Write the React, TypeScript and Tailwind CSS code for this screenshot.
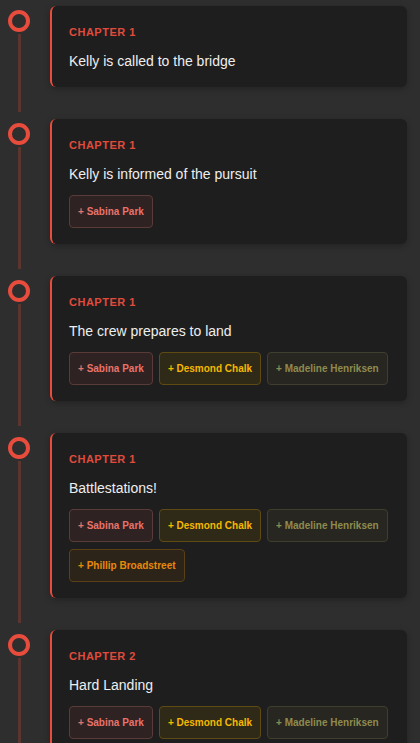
// Timeline of story events with chapter labels and character tags.
type Tag = { name: string; tone: 'sabina' | 'desmond' | 'madeline' | 'phillip' };
type Event = { chapter: string; title: string; tags: Tag[] };

const toneClass: Record<Tag['tone'], string> = {
  sabina: 'border-[#5b3b38] bg-[#2e2222] text-[#e8736b]',
  desmond: 'border-[#5e4a12] bg-[#2f2918] text-[#f5b800]',
  madeline: 'border-[#403e2e] bg-[#272620] text-[#8f8b4f]',
  phillip: 'border-[#5b4015] bg-[#2c2419] text-[#e8890c]',
};

const sabina: Tag = { name: 'Sabina Park', tone: 'sabina' };
const desmond: Tag = { name: 'Desmond Chalk', tone: 'desmond' };
const madeline: Tag = { name: 'Madeline Henriksen', tone: 'madeline' };
const phillip: Tag = { name: 'Phillip Broadstreet', tone: 'phillip' };

const events: Event[] = [
  { chapter: 'Chapter 1', title: 'Kelly is called to the bridge', tags: [] },
  { chapter: 'Chapter 1', title: 'Kelly is informed of the pursuit', tags: [sabina] },
  { chapter: 'Chapter 1', title: 'The crew prepares to land', tags: [sabina, desmond, madeline] },
  { chapter: 'Chapter 1', title: 'Battlestations!', tags: [sabina, desmond, madeline, phillip] },
  { chapter: 'Chapter 2', title: 'Hard Landing', tags: [sabina, desmond, madeline] },
];

export default function App() {
  return (
    <main className="min-h-screen bg-[#2e2e2e] pt-[6px] pr-[13px] font-['Liberation_Sans',Arial,sans-serif]">
      {events.map((event, i) => (
        <div key={i} className="flex">
          <div className="flex w-[50px] shrink-0 flex-col pt-1 pb-[7px]">
            <div className="ml-2 h-[22px] w-[22px] rounded-full border-4 border-[#e74c3c]" />
            <div className="mt-[2px] ml-[18px] w-[3px] flex-1 bg-[#5c3430]" />
          </div>
          <article className="mb-8 flex-1 rounded-md border-l-2 border-[#e74c3c] bg-[#1e1e1e] px-[17px] pt-[18px] pb-4 shadow-[0_2px_6px_rgba(0,0,0,0.25)]">
            <div className="text-[11px] leading-4 font-bold tracking-[0.5px] text-[#e04b3c] uppercase">{event.chapter}</div>
            <h2 className="mt-[11px] text-[14px] leading-5 text-[#eeeeee]">{event.title}</h2>
            {event.tags.length ? (
              <div className="mt-[11px] flex flex-wrap gap-[6px] gap-y-[7px]">
                {event.tags.map((tag) => (
                  <span
                    key={tag.name}
                    className={`flex h-[33px] items-center rounded border px-2 text-[10px] font-bold ${toneClass[tag.tone]}`}
                  >
                    + {tag.name}
                  </span>
                ))}
              </div>
            ) : null}
          </article>
        </div>
      ))}
    </main>
  );
}
